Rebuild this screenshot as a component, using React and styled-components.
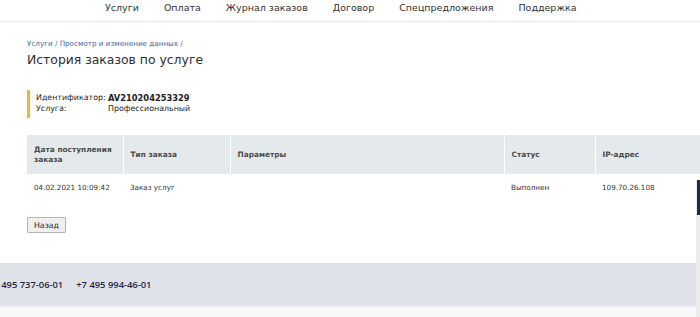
import React from "react";
import styled, { createGlobalStyle } from "styled-components";

const GlobalStyle = createGlobalStyle`
  html, body {
    margin: 0;
    padding: 0;
    background: #fff;
    overflow: hidden;
  }
  body {
    font-family: "DejaVu Sans", Verdana, sans-serif;
    color: #333;
  }
`;

const navItems = [
  "Услуги",
  "Оплата",
  "Журнал заказов",
  "Договор",
  "Спецпредложения",
  "Поддержка",
];

const columns = [
  { title: "Дата поступления заказа", width: 96 },
  { title: "Тип заказа", width: 107 },
  { title: "Параметры", width: 274 },
  { title: "Статус", width: 91 },
  { title: "IP-адрес", width: 140 },
];

const rows = [["04.02.2021 10:09:42", "Заказ услуг", "", "Выполнен", "109.70.26.108"]];

const App = () => {
  return (
    <Page>
      <GlobalStyle />
      <TopNav>
        {navItems.map((item) => (
          <NavLink key={item}>{item}</NavLink>
        ))}
      </TopNav>
      <Content>
        <Breadcrumbs>
          <a>Услуги</a> / <a>Просмотр и изменение данных</a> /
        </Breadcrumbs>
        <Title>История заказов по услуге</Title>
        <InfoBox>
          <InfoRow>
            <span>Идентификатор:</span>
            <b>AV210204253329</b>
          </InfoRow>
          <InfoRow>
            <span>Услуга:</span>
            <span>Профессиональный</span>
          </InfoRow>
        </InfoBox>
        <OrdersTable>
          <colgroup>
            {columns.map((c) => (
              <col key={c.title} style={{ width: c.width }} />
            ))}
          </colgroup>
          <thead>
            <tr>
              {columns.map((c) => (
                <HeadCell key={c.title}>{c.title}</HeadCell>
              ))}
            </tr>
          </thead>
          <tbody>
            {rows.map((r, i) => (
              <tr key={i}>
                {r.map((v, j) => (
                  <Cell key={j}>{v}</Cell>
                ))}
              </tr>
            ))}
          </tbody>
        </OrdersTable>
        <BackButton>Назад</BackButton>
      </Content>
      <Footer>
        <Phone $shift>+7 495 737-06-01</Phone>
        <Phone>+7 495 994-46-01</Phone>
      </Footer>
      <FooterBottom />
      <SideTab />
    </Page>
  );
};

const Page = styled.div`
  position: relative;
  width: 700px;
  height: 317px;
  overflow: hidden;
`;

const TopNav = styled.nav`
  display: flex;
  gap: 25px;
  padding-left: 105px;
  height: 23px;
  align-items: flex-start;
  padding-top: 2px;
  box-sizing: border-box;
  border-bottom: 3px solid #f4f4f4;
`;

const NavLink = styled.a`
  font-size: 9.5px;
  line-height: 12px;
  color: #333;
  cursor: pointer;
`;

const Content = styled.main`
  padding: 16px 0 0 27px;
  height: 240px;
  box-sizing: border-box;
`;

const Breadcrumbs = styled.div`
  font-size: 7.2px;
  line-height: 10px;
  color: #4a6f96;

  a {
    color: #3a6a9e;
    cursor: pointer;
  }
`;

const Title = styled.h1`
  margin: 3px 0 0;
  font-size: 12.4px;
  font-weight: normal;
  line-height: 16px;
  color: #2e2e2e;
`;

const InfoBox = styled.div`
  margin-top: 22px;
  border-left: 3px solid #f0b43c;
  padding: 3px 0 4px 6px;
  width: 200px;
`;

const InfoRow = styled.div`
  display: grid;
  grid-template-columns: 72px auto;
  font-size: 7.9px;
  line-height: 10.5px;
  color: #222;

  b {
    font-size: 8.3px;
    color: #222;
  }
`;

const OrdersTable = styled.table`
  margin-top: 17px;
  border-collapse: collapse;
  table-layout: fixed;
  width: 708px;
`;

const HeadCell = styled.th`
  background: #e4eaec;
  height: 39px;
  padding: 0 3px 0 7px;
  text-align: left;
  vertical-align: middle;
  font-size: 7.4px;
  line-height: 10px;
  font-weight: bold;
  color: #4a4a4a;
  border-left: 1px solid #fff;

  &:first-child {
    border-left: none;
  }
`;

const Cell = styled.td`
  height: 26px;
  padding: 0 3px 0 7px;
  font-size: 7.2px;
  color: #333;
  white-space: nowrap;
  vertical-align: middle;
`;

const BackButton = styled.button`
  margin-top: 17px;
  height: 16px;
  padding: 0 6px;
  font-family: "DejaVu Sans", Verdana, sans-serif;
  font-size: 7.8px;
  color: #222;
  background: #efefef;
  border: 1px solid #b5b5b5;
  border-radius: 1px;
`;

const Footer = styled.footer`
  height: 42px;
  background: #dfe1e8;
  border-bottom: 2px solid #e7e8ef;
  display: flex;
  align-items: center;
  gap: 13px;
`;

const Phone = styled.span`
  margin-left: ${(p) => (p.$shift ? "-12px" : "0")};
  font-family: "Open Sans", sans-serif;
  font-weight: 600;
  font-size: 9.4px;
  color: #1d2948;
`;

const FooterBottom = styled.div`
  height: 12px;
  background: #f8f8f8;
`;

const SideTab = styled.div`
  position: absolute;
  right: 0;
  top: 180px;
  width: 4px;
  height: 137px;
  background: #ececec;

  &::before {
    content: "";
    position: absolute;
    left: 1px;
    top: 0;
    width: 3px;
    height: 35px;
    background: #1e2a45;
  }
`;

export default App;
